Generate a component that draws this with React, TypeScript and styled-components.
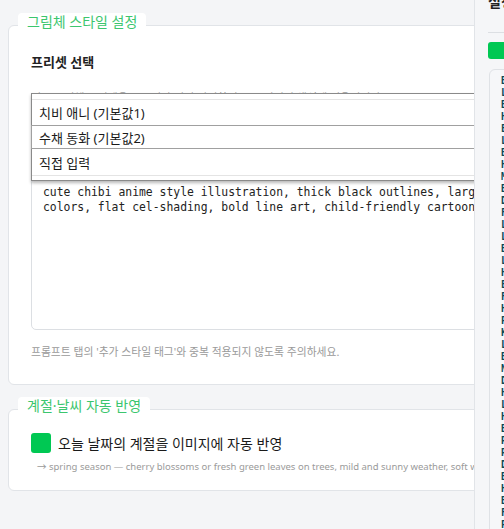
import React from 'react';
import styled, { createGlobalStyle } from 'styled-components';

const GlobalStyle = createGlobalStyle`
    html, body {
        margin: 0;
        padding: 0;
        overflow: hidden;
        background: #f4f5f7;
    }
    body {
        font-family: "Noto Sans", "Noto Sans CJK KR", sans-serif;
        color: #222;
    }
`;

const green = '#00c853';

const Layout = styled.div`
    display: flex;
    width: 100%;
    height: 529px;
    overflow: hidden;
`;

const Main = styled.main`
    width: 474px;
    flex-shrink: 0;
    overflow: hidden;
    padding: 13px 0 0 8px;
    box-sizing: border-box;
`;

const Column = styled.div`
    width: 640px;
    display: flex;
    flex-direction: column;
    gap: 12px;
`;

const Section = styled.section`
    display: flex;
    flex-direction: column;
    align-items: flex-start;
`;

const Legend = styled.div`
    position: relative;
    z-index: 1;
    margin: 0 0 -5px 10px;
    padding: 0 9px;
    height: 17px;
    line-height: 17px;
    font-size: 14px;
    color: #3cc66e;
    background: #fff;
    border-radius: 4px 4px 0 0;
`;

const Card = styled.div<{ $pad: string }>`
    align-self: stretch;
    background: #fff;
    border: 1px solid #e1e4e8;
    border-radius: 6px;
    padding: ${p => p.$pad};
    display: flex;
    flex-direction: column;
    align-items: flex-start;
`;

const Title = styled.div`
    font-size: 13px;
    font-weight: 700;
    line-height: 18px;
`;

const Hint = styled.div<{ $size?: number; $top?: number; $indent?: number }>`
    font-size: ${p => p.$size ?? 10}px;
    line-height: 14px;
    color: #9a9a9a;
    margin-top: ${p => p.$top ?? 0}px;
    padding-left: ${p => p.$indent ?? 0}px;
    white-space: nowrap;
`;

const SelectWrap = styled.div`
    position: relative;
    align-self: stretch;
    margin-top: 4px;
`;

const Select = styled.div`
    height: 30px;
    border: 1px solid #d6d9de;
    border-radius: 4px;
    box-sizing: border-box;
`;

const Popup = styled.div`
    position: absolute;
    top: -16px;
    left: 0;
    right: -40px;
    z-index: 5;
    background: #fff;
    border: 1px solid #8a8a8a;
    box-shadow: 0 2px 3px rgba(0, 0, 0, 0.28);
    padding: 5px 0 4px;
`;

const OptionList = styled.div`
    border-top: 1px solid #e4e4e4;
    border-bottom: 1px solid #e4e4e4;
    display: flex;
    flex-direction: column;
`;

const Option = styled.div<{ $active?: boolean; $h: number }>`
    height: ${p => p.$h}px;
    box-sizing: border-box;
    display: flex;
    align-items: center;
    padding-left: 7px;
    font-size: 13px;
    color: #1a1a1a;
    border: 1px solid ${p => (p.$active ? '#a0a0a0' : 'transparent')};
    margin-left: -1px;
`;

const PromptBox = styled.textarea`
    align-self: stretch;
    margin-top: 39px;
    height: 152px;
    box-sizing: border-box;
    resize: none;
    border: 1px solid #dcdfe3;
    border-radius: 5px;
    padding: 6px 11px;
    font-family: "DejaVu Sans Mono", monospace;
    font-size: 11.4px;
    line-height: 15px;
    color: #222;
    background: #fff;
    white-space: pre;
    overflow: hidden;
    outline: none;
`;

const CheckRow = styled.label`
    display: flex;
    align-items: center;
    gap: 7px;
    font-size: 14px;
    color: #1a1a1a;
`;

const CheckBox = styled.span`
    width: 20px;
    height: 20px;
    border-radius: 3px;
    background: ${green};
`;

const Side = styled.aside`
    flex: 1;
    min-width: 0;
    border-left: 1px solid #e1e4e8;
    background: #f5f6f8;
    padding: 0 0 0 13px;
    overflow: hidden;
`;

const SideInner = styled.div`
    width: 300px;
    margin-top: -8px;
    display: flex;
    flex-direction: column;
`;

const SideTitle = styled.div`
    font-size: 14px;
    font-weight: 700;
    line-height: 20px;
    padding-bottom: 20px;
    border-bottom: 1px solid #dcdfe3;
`;

const ApplyButton = styled.div`
    margin-top: 9px;
    height: 17px;
    border-radius: 3px 0 0 3px;
    background: ${green};
`;

const PreviewCard = styled.div`
    margin: 10px 0 0 1px;
    border: 1px solid #dfe2e6;
    border-radius: 6px;
    background: #f6f7f9;
    padding: 5px 11px;
    font-family: "DejaVu Sans Mono", monospace;
    font-size: 10px;
    font-weight: 700;
    line-height: 12px;
    color: #0b4a5a;
    white-space: pre;
`;

const prompt =
    'cute chibi anime style illustration, thick black outlines, large expressive eyes, vibrant\n' +
    'colors, flat cel-shading, bold line art, child-friendly cartoon look';

// each preview row is a "Key: value" pair of the active style preset
const previewLines = [
    'Base: cute chibi anime', 'Line: thick black', 'Body: 2-head ratio', 'Hair: soft shine',
    'Eyes: large, sparkly', 'Light: flat cel', 'BG: simple pastel', 'Hue: vibrant',
    'Mood: cheerful', 'Brush: clean', 'Detail: low', 'Frame: centered',
    'Lens: none', 'Light: spring sun', 'Bloom: cherry', 'Leaf: fresh green',
    'Haze: mild', 'Edge: bold', 'Fill: solid', 'Heat: soft warm',
    'Pose: playful', 'Kids: friendly', 'Look: cartoon', 'Blend: none',
    'Noise: off', 'Depth: shallow', 'Halo: off', 'Light: even',
    'Hint: season', 'Basis: preset 1', 'Ratio: 1:1', 'Render: 2d',
    'DPI: 300', 'Bright: high', 'Hard shadow: off', 'Border: none',
    'Format: png', 'Pad: 0', 'Lock: style',
];

const App: React.FC = () => {
    return (
        <>
            <GlobalStyle />
            <Layout>
                <Main>
                    <Column>
                        <Section>
                            <Legend>그림체 스타일 설정</Legend>
                            <Card $pad="27px 22px 25px">
                                <Title>프리셋 선택</Title>
                                <Hint $size={11} $top={20}>
                                    기본 그림체 프리셋을 고르거나 직접 입력하면 모든 이미지 생성에 적용됩니다.
                                </Hint>
                                <SelectWrap>
                                    <Select />
                                    <Popup>
                                        <OptionList>
                                            <Option $h={25}>치비 애니 (기본값1)</Option>
                                            <Option $h={24} $active>수채 동화 (기본값2)</Option>
                                            <Option $h={26}>직접 입력</Option>
                                        </OptionList>
                                    </Popup>
                                </SelectWrap>
                                <PromptBox readOnly value={prompt} />
                                <Hint $size={10.8} $top={15}>프롬프트 탭의 '추가 스타일 태그'와 중복 적용되지 않도록 주의하세요.</Hint>
                            </Card>
                        </Section>
                        <Section>
                            <Legend>계절·날씨 자동 반영</Legend>
                            <Card $pad="23px 22px 16px">
                                <CheckRow>
                                    <CheckBox />
                                    오늘 날짜의 계절을 이미지에 자동 반영
                                </CheckRow>
                                <Hint $size={9.5} $top={7} $indent={6}>
                                    → spring season — cherry blossoms or fresh green leaves on trees, mild and sunny weather, soft warm sunlight
                                </Hint>
                            </Card>
                        </Section>
                    </Column>
                </Main>
                <Side>
                    <SideInner>
                        <SideTitle>설정 미리보기</SideTitle>
                        <ApplyButton />
                        <PreviewCard>{previewLines.join('\n')}</PreviewCard>
                    </SideInner>
                </Side>
            </Layout>
        </>
    );
};

export default App;
